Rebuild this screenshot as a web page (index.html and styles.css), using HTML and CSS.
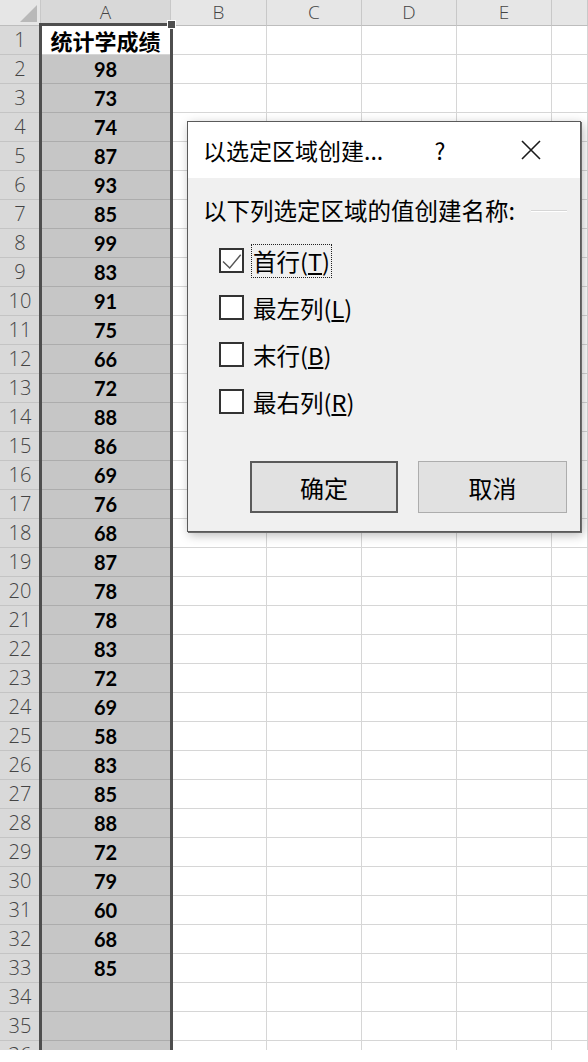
FILE: index.html
```html
<!DOCTYPE html>
<html lang="zh-CN">
<head>
<meta charset="utf-8">
<title>以选定区域创建名称</title>
<link rel="stylesheet" href="styles.css">
</head>
<body>
<div class="sheet">
  <div class="row hdr">
    <div class="corner"><span class="tri"></span></div>
    <div class="ch ch-sel">A</div><div class="ch">B</div><div class="ch">C</div><div class="ch">D</div><div class="ch">E</div><div class="ch"></div>
  </div>
  <div class="row"><div class="rh">1</div><div class="a a1">统计学成绩</div><div class="c"></div><div class="c"></div><div class="c"></div><div class="c"></div><div class="c"></div></div>
  <div class="row"><div class="rh">2</div><div class="a">98</div><div class="c"></div><div class="c"></div><div class="c"></div><div class="c"></div><div class="c"></div></div>
  <div class="row"><div class="rh">3</div><div class="a">73</div><div class="c"></div><div class="c"></div><div class="c"></div><div class="c"></div><div class="c"></div></div>
  <div class="row"><div class="rh">4</div><div class="a">74</div><div class="c"></div><div class="c"></div><div class="c"></div><div class="c"></div><div class="c"></div></div>
  <div class="row"><div class="rh">5</div><div class="a">87</div><div class="c"></div><div class="c"></div><div class="c"></div><div class="c"></div><div class="c"></div></div>
  <div class="row"><div class="rh">6</div><div class="a">93</div><div class="c"></div><div class="c"></div><div class="c"></div><div class="c"></div><div class="c"></div></div>
  <div class="row"><div class="rh">7</div><div class="a">85</div><div class="c"></div><div class="c"></div><div class="c"></div><div class="c"></div><div class="c"></div></div>
  <div class="row"><div class="rh">8</div><div class="a">99</div><div class="c"></div><div class="c"></div><div class="c"></div><div class="c"></div><div class="c"></div></div>
  <div class="row"><div class="rh">9</div><div class="a">83</div><div class="c"></div><div class="c"></div><div class="c"></div><div class="c"></div><div class="c"></div></div>
  <div class="row"><div class="rh">10</div><div class="a">91</div><div class="c"></div><div class="c"></div><div class="c"></div><div class="c"></div><div class="c"></div></div>
  <div class="row"><div class="rh">11</div><div class="a">75</div><div class="c"></div><div class="c"></div><div class="c"></div><div class="c"></div><div class="c"></div></div>
  <div class="row"><div class="rh">12</div><div class="a">66</div><div class="c"></div><div class="c"></div><div class="c"></div><div class="c"></div><div class="c"></div></div>
  <div class="row"><div class="rh">13</div><div class="a">72</div><div class="c"></div><div class="c"></div><div class="c"></div><div class="c"></div><div class="c"></div></div>
  <div class="row"><div class="rh">14</div><div class="a">88</div><div class="c"></div><div class="c"></div><div class="c"></div><div class="c"></div><div class="c"></div></div>
  <div class="row"><div class="rh">15</div><div class="a">86</div><div class="c"></div><div class="c"></div><div class="c"></div><div class="c"></div><div class="c"></div></div>
  <div class="row"><div class="rh">16</div><div class="a">69</div><div class="c"></div><div class="c"></div><div class="c"></div><div class="c"></div><div class="c"></div></div>
  <div class="row"><div class="rh">17</div><div class="a">76</div><div class="c"></div><div class="c"></div><div class="c"></div><div class="c"></div><div class="c"></div></div>
  <div class="row"><div class="rh">18</div><div class="a">68</div><div class="c"></div><div class="c"></div><div class="c"></div><div class="c"></div><div class="c"></div></div>
  <div class="row"><div class="rh">19</div><div class="a">87</div><div class="c"></div><div class="c"></div><div class="c"></div><div class="c"></div><div class="c"></div></div>
  <div class="row"><div class="rh">20</div><div class="a">78</div><div class="c"></div><div class="c"></div><div class="c"></div><div class="c"></div><div class="c"></div></div>
  <div class="row"><div class="rh">21</div><div class="a">78</div><div class="c"></div><div class="c"></div><div class="c"></div><div class="c"></div><div class="c"></div></div>
  <div class="row"><div class="rh">22</div><div class="a">83</div><div class="c"></div><div class="c"></div><div class="c"></div><div class="c"></div><div class="c"></div></div>
  <div class="row"><div class="rh">23</div><div class="a">72</div><div class="c"></div><div class="c"></div><div class="c"></div><div class="c"></div><div class="c"></div></div>
  <div class="row"><div class="rh">24</div><div class="a">69</div><div class="c"></div><div class="c"></div><div class="c"></div><div class="c"></div><div class="c"></div></div>
  <div class="row"><div class="rh">25</div><div class="a">58</div><div class="c"></div><div class="c"></div><div class="c"></div><div class="c"></div><div class="c"></div></div>
  <div class="row"><div class="rh">26</div><div class="a">83</div><div class="c"></div><div class="c"></div><div class="c"></div><div class="c"></div><div class="c"></div></div>
  <div class="row"><div class="rh">27</div><div class="a">85</div><div class="c"></div><div class="c"></div><div class="c"></div><div class="c"></div><div class="c"></div></div>
  <div class="row"><div class="rh">28</div><div class="a">88</div><div class="c"></div><div class="c"></div><div class="c"></div><div class="c"></div><div class="c"></div></div>
  <div class="row"><div class="rh">29</div><div class="a">72</div><div class="c"></div><div class="c"></div><div class="c"></div><div class="c"></div><div class="c"></div></div>
  <div class="row"><div class="rh">30</div><div class="a">79</div><div class="c"></div><div class="c"></div><div class="c"></div><div class="c"></div><div class="c"></div></div>
  <div class="row"><div class="rh">31</div><div class="a">60</div><div class="c"></div><div class="c"></div><div class="c"></div><div class="c"></div><div class="c"></div></div>
  <div class="row"><div class="rh">32</div><div class="a">68</div><div class="c"></div><div class="c"></div><div class="c"></div><div class="c"></div><div class="c"></div></div>
  <div class="row"><div class="rh">33</div><div class="a">85</div><div class="c"></div><div class="c"></div><div class="c"></div><div class="c"></div><div class="c"></div></div>
  <div class="row"><div class="rh">34</div><div class="a"></div><div class="c"></div><div class="c"></div><div class="c"></div><div class="c"></div><div class="c"></div></div>
  <div class="row"><div class="rh">35</div><div class="a"></div><div class="c"></div><div class="c"></div><div class="c"></div><div class="c"></div><div class="c"></div></div>
  <div class="row"><div class="rh">36</div><div class="a"></div><div class="c"></div><div class="c"></div><div class="c"></div><div class="c"></div><div class="c"></div></div>

  <div class="selection"></div>
  <div class="handle"></div>

  <div class="dialog">
    <div class="titlebar">
      <span class="title">以选定区域创建...</span>
      <span class="help">?</span>
      <svg class="close" width="20" height="20" viewBox="0 0 20 20"><path d="M1 1 L19 19 M19 1 L1 19" stroke="#1a1a1a" stroke-width="1.6" fill="none"/></svg>
    </div>
    <div class="body">
      <div class="group">
        <span>以下列选定区域的值创建名称:</span>
        <span class="groupline"></span>
      </div>
      <div class="checks">
        <div class="chk">
          <span class="box"><svg width="21" height="21" viewBox="0 0 21 21"><polyline points="2,11.4 8.7,18 19.7,4.7" fill="none" stroke="#555" stroke-width="1.4"/></svg></span>
          <span class="lbl focus">首行(<u>T</u>)</span>
        </div>
        <div class="chk"><span class="box"></span><span class="lbl">最左列(<u>L</u>)</span></div>
        <div class="chk"><span class="box"></span><span class="lbl">末行(<u>B</u>)</span></div>
        <div class="chk"><span class="box"></span><span class="lbl">最右列(<u>R</u>)</span></div>
      </div>
      <div class="buttons">
        <button class="btn default">确定</button>
        <button class="btn">取消</button>
      </div>
    </div>
  </div>
</div>
</body>
</html>
```
FILE: styles.css
```css
html, body {
  margin: 0;
  padding: 0;
  background: #ffffff;
}

.sheet {
  position: relative;
  width: 588px;
  height: 1050px;
  overflow: hidden;
  background: #ffffff;
}

.row {
  display: grid;
  grid-template-columns: 41px 130px 96px 95px 95px 95px 1fr;
  height: 29px;
}

.row.hdr {
  height: 26px;
}

.row > div {
  box-sizing: border-box;
  border-right: 1px solid #d6d6d6;
  border-bottom: 1px solid #d6d6d6;
}

.corner {
  position: relative;
  background: #e6e6e6;
  border-right-color: #c8c8c8 !important;
  border-bottom-color: #bdbdbd !important;
}

.tri {
  position: absolute;
  right: 3px;
  bottom: 3px;
  width: 0;
  height: 0;
  border-left: 17px solid transparent;
  border-bottom: 17px solid #b9b9b9;
}

.ch {
  background: #e6e6e6;
  border-right-color: #c8c8c8 !important;
  border-bottom-color: #bdbdbd !important;
  font-family: "Open Sans", "Noto Sans", sans-serif;
  font-weight: 300;
  font-size: 19px;
  color: #444;
  display: flex;
  align-items: center;
  justify-content: center;
  line-height: 1;
}

.ch-sel {
  background: #d8d8d8;
}

.rh {
  background: #d9d9d9;
  border-right-color: #bdbdbd !important;
  border-bottom-color: #c4c4c4 !important;
  font-family: "Open Sans", "Noto Sans", sans-serif;
  font-weight: 300;
  font-size: 20px;
  color: #444;
  display: flex;
  align-items: center;
  justify-content: center;
  line-height: 1;
}

.a {
  background: #c6c6c6;
  border-bottom-color: #acacac !important;
  font-family: Lato, "Liberation Sans", sans-serif;
  font-weight: 700;
  font-size: 20px;
  color: #000;
  display: flex;
  align-items: center;
  justify-content: center;
  line-height: 1;
}

.a1 {
  background: #ffffff;
  font-family: "Noto Sans CJK SC", sans-serif;
  font-size: 22px;
  border-bottom-color: #d6d6d6 !important;
}

.selection {
  position: absolute;
  left: 39px;
  top: 23px;
  width: 134px;
  height: 1100px;
  box-sizing: border-box;
  border: 3px solid #4e4e4e;
  pointer-events: none;
}

.handle {
  position: absolute;
  left: 168px;
  top: 21px;
  width: 7px;
  height: 7px;
  background: #4e4e4e;
  box-shadow: 0 0 0 1px #ffffff;
}

/* Dialog */
.dialog {
  position: absolute;
  left: 187px;
  top: 121px;
  width: 394px;
  height: 411px;
  box-sizing: border-box;
  border: 1px solid #5a5a5a;
  background: #f0f0f0;
  box-shadow: 1px 1px 0 #6a6a6a, 2px 3px 10px rgba(0, 0, 0, 0.28);
  font-family: "Noto Sans CJK SC", sans-serif;
  color: #000;
  display: flex;
  flex-direction: column;
}

.titlebar {
  height: 56px;
  background: #ffffff;
  display: flex;
  align-items: center;
  padding-left: 15px;
  position: relative;
}

.title {
  font-size: 23px;
  line-height: 1;
  width: 230px;
  white-space: nowrap;
}

.help {
  font-size: 23px;
  line-height: 1;
  margin-left: -3px;
  width: 20px;
  text-align: center;
}

.close {
  margin-left: 71px;
}

.body {
  flex: 1;
  display: flex;
  flex-direction: column;
  padding: 17px 13px 18px 15px;
}

.group {
  display: flex;
  align-items: center;
  height: 32px;
  font-size: 23.5px;
  line-height: 1;
  white-space: nowrap;
}

.groupline {
  flex: 1;
  margin-left: 16px;
  height: 1px;
  background: #d6d6d6;
  border-bottom: 1px solid #ffffff;
}

.checks {
  margin-top: 10px;
  padding-left: 16px;
  display: flex;
  flex-direction: column;
}

.chk {
  height: 47px;
  display: flex;
  align-items: center;
}

.box {
  width: 25px;
  height: 25px;
  box-sizing: border-box;
  border: 2px solid #333333;
  background: #ffffff;
  display: flex;
}

.lbl {
  margin-left: 7px;
  padding: 3px 1px;
  font-size: 23.5px;
  line-height: 26px;
  border: 1px dotted transparent;
  white-space: nowrap;
}

.lbl.focus {
  border-color: #222;
}

.lbl u {
  text-decoration: underline;
  text-underline-offset: 2px;
}

.buttons {
  margin-top: auto;
  display: flex;
  justify-content: flex-end;
  gap: 20px;
}

.btn {
  width: 149px;
  height: 52px;
  box-sizing: border-box;
  background: #e1e1e1;
  border: 1px solid #adadad;
  font-family: "Noto Sans CJK SC", sans-serif;
  font-size: 24px;
  color: #000;
  padding: 0;
  margin: 0;
}

.btn.default {
  width: 148px;
  border: 2px solid #5a5a5a;
}
```
